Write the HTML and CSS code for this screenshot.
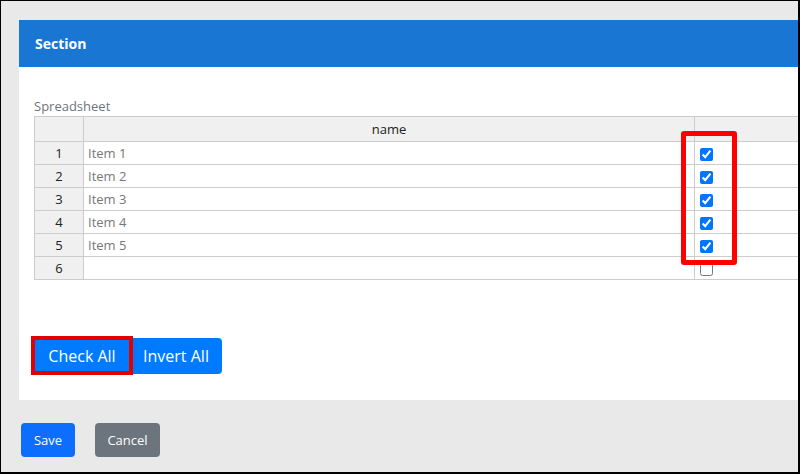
FILE: index.html
```html
<!DOCTYPE html>
<html>
<head>
<meta charset="utf-8">
<link rel="stylesheet" href="styles.css">
</head>
<body>
<div class="frame">
  <div class="card">
    <div class="card-header">Section</div>
    <div class="card-body">
      <div class="label">Spreadsheet</div>
      <div class="sheet-wrap">
        <table class="sheet">
          <colgroup><col class="c-idx"><col class="c-name"><col class="c-chk"></colgroup>
          <thead>
            <tr><th></th><th>name</th><th></th></tr>
          </thead>
          <tbody>
            <tr><td class="idx">1</td><td class="nm">Item 1</td><td class="ck"><input type="checkbox" checked></td></tr>
            <tr><td class="idx">2</td><td class="nm">Item 2</td><td class="ck"><input type="checkbox" checked></td></tr>
            <tr><td class="idx">3</td><td class="nm">Item 3</td><td class="ck"><input type="checkbox" checked></td></tr>
            <tr><td class="idx">4</td><td class="nm">Item 4</td><td class="ck"><input type="checkbox" checked></td></tr>
            <tr><td class="idx">5</td><td class="nm">Item 5</td><td class="ck"><input type="checkbox" checked></td></tr>
            <tr><td class="idx">6</td><td class="nm"></td><td class="ck"><input type="checkbox"></td></tr>
          </tbody>
        </table>
        <div class="hl hl-checks"></div>
      </div>
      <div class="btn-group">
        <button class="gbtn first">Check All</button>
        <button class="gbtn last">Invert All</button>
        <div class="hl hl-btn"></div>
      </div>
    </div>
  </div>
  <div class="footer">
    <button class="btn save">Save</button>
    <button class="btn cancel">Cancel</button>
  </div>
</div>
</body>
</html>
```
FILE: styles.css
```css
html, body {
  margin: 0;
  padding: 0;
}
body {
  font-family: "Open Sans", "Noto Sans", sans-serif;
}
.frame {
  box-sizing: border-box;
  width: 800px;
  height: 474px;
  background: #e9e9e9;
  border-style: solid;
  border-color: #000;
  border-width: 1px 2px 2px 1px;
  padding: 19px 0 0 18px;
  overflow: hidden;
}
.card {
  background: #fff;
  overflow: hidden;
}
.card-header {
  height: 47px;
  box-sizing: border-box;
  background: #1976d2;
  color: #fff;
  font-weight: 700;
  font-size: 14px;
  line-height: 47px;
  padding-left: 16px;
}
.card-body {
  padding: 29px 0 26px 15px;
}
.label {
  font-size: 13px;
  color: #6c757d;
  line-height: 20px;
}
.sheet-wrap {
  position: relative;
  width: 820px;
}
.sheet {
  border-collapse: collapse;
  table-layout: fixed;
  width: 820px;
  font-size: 13px;
}
.c-idx { width: 49px; }
.c-name { width: 611px; }
.c-chk { width: 160px; }
.sheet th, .sheet td {
  border: 1px solid #ccc;
  padding: 0;
  height: 22px;
  line-height: 22px;
}
.sheet th {
  background: #f0f0f0;
  font-weight: 400;
  color: #222;
  height: 24px;
}
.sheet td.idx {
  background: #f0f0f0;
  text-align: center;
  color: #222;
}
.sheet td.nm {
  color: #777;
  padding-left: 4px;
}
.sheet td.ck {
  padding-left: 1px;
}
.sheet td.ck input {
  width: 13px;
  height: 13px;
  margin: 0 0 0 4px;
  vertical-align: middle;
}
.hl {
  position: absolute;
  border: 5px solid #f00;
  border-radius: 3px;
  box-sizing: border-box;
}
.hl-checks {
  left: 647px;
  top: 15px;
  width: 56px;
  height: 134px;
}
.btn-group {
  position: relative;
  display: flex;
  margin-top: 58px;
}
.gbtn {
  font-family: inherit;
  font-size: 16px;
  color: #fff;
  background: #007bff;
  border: none;
  height: 36px;
  padding: 0;
  margin: 0;
  white-space: nowrap;
}
.gbtn.first {
  border-radius: 4px 0 0 4px;
  width: 96px;
}
.gbtn.last {
  border-radius: 0 4px 4px 0;
  width: 92px;
}
.hl-btn {
  left: -3px;
  top: -2px;
  width: 102px;
  height: 39px;
  border-width: 4px;
  border-color: #e50000;
  border-radius: 0;
}
.footer {
  display: flex;
  gap: 20px;
  padding: 23px 0 0 2px;
}
.btn {
  font-family: inherit;
  font-size: 13px;
  color: #fff;
  border: none;
  border-radius: 4px;
  height: 34px;
  padding: 0;
}
.save {
  background: #0d6efd;
  width: 54px;
}
.cancel {
  background: #6c757d;
  width: 65px;
}
```
